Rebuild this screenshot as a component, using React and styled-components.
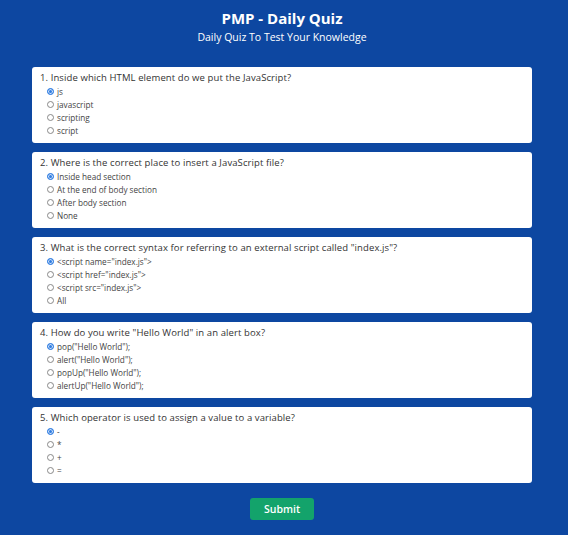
import React, { useState } from "react";
import styled, { createGlobalStyle } from "styled-components";

const GlobalStyle = createGlobalStyle`
  html, body {
    margin: 0;
    padding: 0;
    background: #0d47a1;
  }
  body {
    font-family: "Open Sans", "DejaVu Sans", sans-serif;
  }
`;

const questions = [
  {
    q: "1. Inside which HTML element do we put the JavaScript?",
    options: ["js", "javascript", "scripting", "script"],
  },
  {
    q: "2. Where is the correct place to insert a JavaScript file?",
    options: ["Inside head section", "At the end of body section", "After body section", "None"],
  },
  {
    q: '3. What is the correct syntax for referring to an external script called "index.js"?',
    options: ['<script name="index.js">', '<script href="index.js">', '<script src="index.js">', "All"],
  },
  {
    q: '4. How do you write "Hello World" in an alert box?',
    options: ['pop("Hello World");', 'alert("Hello World");', 'popUp("Hello World");', 'alertUp("Hello World");'],
  },
  {
    q: "5. Which operator is used to assign a value to a variable?",
    options: ["-", "*", "+", "="],
  },
];

const Page = styled.div`
  width: 564px;
  min-height: 535px;
  box-sizing: border-box;
  padding: 8px 0 16px;
  display: flex;
  flex-direction: column;
  align-items: center;
`;

const Header = styled.header`
  text-align: center;
  color: #fff;
  margin-bottom: 21px;
`;

const Title = styled.h1`
  margin: 0;
  font-size: 15px;
  font-weight: 700;
  line-height: 20px;
`;

const Subtitle = styled.p`
  margin: 0;
  font-size: 10.5px;
  line-height: 18px;
`;

const List = styled.div`
  display: flex;
  flex-direction: column;
  gap: 9px;
  width: 500px;
`;

const Card = styled.section`
  background: #fff;
  border-radius: 3px;
  padding: 4px 8px 6px;
  height: 76px;
  box-sizing: border-box;
  color: #333;
`;

const Question = styled.div`
  font-size: 9.5px;
  line-height: 13px;
  margin-bottom: 1px;
  letter-spacing: 0.1px;
`;

const Option = styled.label`
  display: flex;
  align-items: center;
  gap: 3px;
  height: 13px;
  padding-left: 7px;
  font-size: 8.2px;
  color: #444;
`;

const Radio = styled.span`
  width: 7px;
  height: 7px;
  border-radius: 50%;
  box-sizing: border-box;
  border: 1px solid ${(p) => (p.$on ? "#2f7de1" : "#888")};
  background: ${(p) => (p.$on ? "#2f7de1" : "#fff")};
  box-shadow: ${(p) => (p.$on ? "inset 0 0 0 1px #cfe0f8" : "none")};
  flex: none;
`;

const Submit = styled.button`
  margin-top: 15px;
  width: 64px;
  height: 22px;
  border: none;
  border-radius: 3px;
  background: #13a36b;
  color: #fff;
  font-family: inherit;
  font-size: 10.5px;
  font-weight: 600;
  cursor: pointer;
`;

export default function App() {
  const [answers, setAnswers] = useState(questions.map(() => 0));
  return (
    <Page>
      <GlobalStyle />
      <Header>
        <Title>PMP - Daily Quiz</Title>
        <Subtitle>Daily Quiz To Test Your Knowledge</Subtitle>
      </Header>
      <List>
        {questions.map((item, qi) => (
          <Card key={qi}>
            <Question>{item.q}</Question>
            {item.options.map((opt, oi) => (
              <Option
                key={oi}
                onClick={() =>
                  setAnswers(answers.map((a, i) => (i === qi ? oi : a)))
                }
              >
                <Radio $on={answers[qi] === oi} />
                {opt}
              </Option>
            ))}
          </Card>
        ))}
      </List>
      <Submit>Submit</Submit>
    </Page>
  );
}
